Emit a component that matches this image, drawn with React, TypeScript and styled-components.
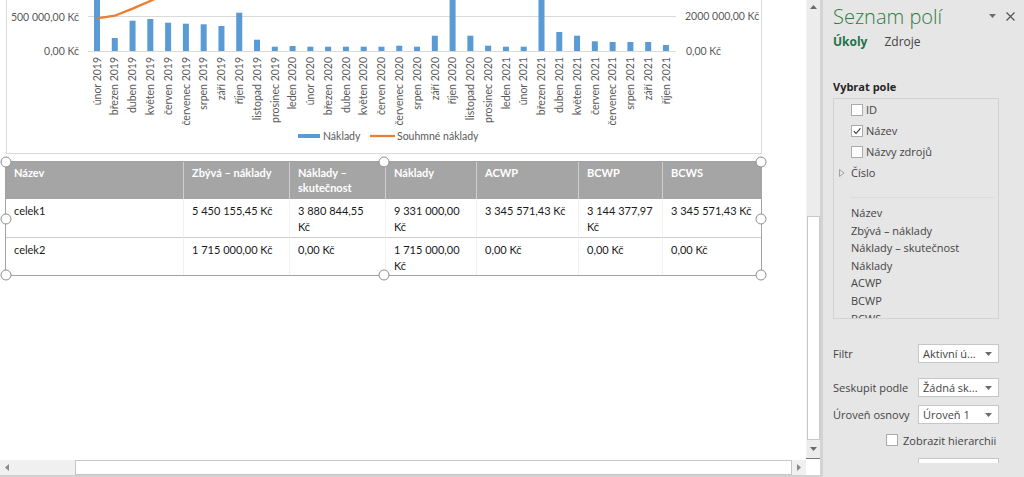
import styled, { createGlobalStyle } from 'styled-components';

const GlobalStyle = createGlobalStyle`
  html, body {
    margin: 0;
    padding: 0;
    overflow: hidden;
    background: #fff;
  }
  body {
    font-family: 'Open Sans', 'Liberation Sans', sans-serif;
  }
`;

const months = [
  'únor 2019', 'březen 2019', 'duben 2019', 'květen 2019', 'červen 2019', 'červenec 2019',
  'srpen 2019', 'září 2019', 'říjen 2019', 'listopad 2019', 'prosinec 2019', 'leden 2020',
  'únor 2020', 'březen 2020', 'duben 2020', 'květen 2020', 'červen 2020', 'červenec 2020',
  'srpen 2020', 'září 2020', 'říjen 2020', 'listopad 2020', 'prosinec 2020', 'leden 2021',
  'únor 2021', 'březen 2021', 'duben 2021', 'květen 2021', 'červen 2021', 'červenec 2021',
  'srpen 2021', 'září 2021', 'říjen 2021',
];

// top edge of each bar (y), baseline is at 51
const barTops = [
  -5, 38, 20.7, 19, 22.7, 23.7, 24.3, 26, 12.7, 39.7, 46.7, 46, 46.7, 46.7, 46.7, 46.7, 46.7,
  45.7, 46.7, 35.7, -5, 35.7, 45.7, 46.7, 46.7, -5, 32, 35.7, 41.3, 42, 42, 42, 45,
];

const BAR_X0 = 97;
const BAR_STEP = 17.78;
const BASE = 51;

const headers = ['Název', 'Zbývá – náklady', 'Náklady –\nskutečnost', 'Náklady', 'ACWP', 'BCWP', 'BCWS'];
const rows = [
  ['celek1', '5 450 155,45 Kč', '3 880 844,55\nKč', '9 331 000,00\nKč', '3 345 571,43 Kč', '3 144 377,97\nKč', '3 345 571,43 Kč'],
  ['celek2', '1 715 000,00 Kč', '0,00 Kč', '1 715 000,00\nKč', '0,00 Kč', '0,00 Kč', '0,00 Kč'],
];

const handles = [
  [0, 0], [50, 0], [100, 0],
  [0, 50], [100, 50],
  [0, 100], [50, 100], [100, 100],
];

const fields = [
  { name: 'ID', checked: false },
  { name: 'Název', checked: true },
  { name: 'Názvy zdrojů', checked: false },
];

const columns = ['Název', 'Zbývá – náklady', 'Náklady – skutečnost', 'Náklady', 'ACWP', 'BCWP', 'BCWS'];

const Caret = () => (
  <svg width="7" height="4" viewBox="0 0 7 4">
    <path d="M0 0 L7 0 L3.5 4 Z" fill="#6b6b6b" />
  </svg>
);

const Chart = () => (
  <ChartFrame>
    <svg width={754} height={153} viewBox="7 0 754 153">
      <line x1={88} x2={676} y1={16.5} y2={16.5} stroke="#d9d9d9" />
      <line x1={88} x2={676} y1={51.5} y2={51.5} stroke="#d9d9d9" />
      <AxisText x={79} y={20.5} textAnchor="end">500 000,00 Kč</AxisText>
      <AxisText x={79} y={55} textAnchor="end">0,00 Kč</AxisText>
      <AxisText x={685} y={20} textAnchor="start">2000 000,00 Kč</AxisText>
      <AxisText x={686} y={55} textAnchor="start">0,00 Kč</AxisText>
      {barTops.map((t, i) => (
        <rect key={i} x={BAR_X0 + i * BAR_STEP - 3} y={t} width={6} height={BASE - t} fill="#5b9bd5" />
      ))}
      <polyline
        points="97,18.3 114.8,15.7 132.6,8.6 150.3,1 168,-7"
        fill="none"
        stroke="#ed7d31"
        strokeWidth={2.25}
        strokeLinejoin="round"
      />
      {months.map((m, i) => (
        <AxisText
          key={m}
          textAnchor="end"
          transform={`translate(${BAR_X0 + i * BAR_STEP + 3.7},57) rotate(-90)`}
        >
          {m}
        </AxisText>
      ))}
      <rect x={298} y={134} width={22} height={4} fill="#5b9bd5" />
      <AxisText x={323} y={139.5}>Náklady</AxisText>
      <line x1={370} x2={395} y1={136} y2={136} stroke="#ed7d31" strokeWidth={2.25} />
      <AxisText x={397} y={139.5}>Souhmné náklady</AxisText>
    </svg>
  </ChartFrame>
);

const DataTable = () => (
  <TableFrame>
    <Grid>
      {headers.map((h, i) => (
        <HeadCell key={h} $last={i === headers.length - 1}>{h}</HeadCell>
      ))}
      {rows.map((r, ri) =>
        r.map((c, ci) => (
          <BodyCell key={`${ri}-${ci}`} $last={ci === r.length - 1} $divider={ri === 0}>
            {c}
          </BodyCell>
        ))
      )}
    </Grid>
    {handles.map(([x, y], i) => (
      <Handle key={i} $x={x} $y={y} />
    ))}
  </TableFrame>
);

const Scrollbars = () => (
  <>
    <VScroll>
      <ArrowBox $h={14}>
        <svg width="7" height="4" viewBox="0 0 7 4"><path d="M0 4 L7 4 L3.5 0 Z" fill="#6b6b6b" /></svg>
      </ArrowBox>
      <Spacer />
      <VThumb />
      <ArrowBox $h={18}>
        <Caret />
      </ArrowBox>
    </VScroll>
    <HScroll>
      <HArrow>
        <svg width="4" height="7" viewBox="0 0 4 7"><path d="M4 0 L4 7 L0 3.5 Z" fill="#8a8a8a" /></svg>
      </HArrow>
      <HTrack />
      <HThumb />
      <HArrow>
        <svg width="4" height="7" viewBox="0 0 4 7"><path d="M0 0 L0 7 L4 3.5 Z" fill="#8a8a8a" /></svg>
      </HArrow>
    </HScroll>
    <Corner />
  </>
);

const FieldPanel = () => (
  <Panel>
    <PanelBody>
      <TitleRow>
        <Title>Seznam polí</Title>
        <TitleTools>
          <Caret />
          <svg width="9" height="9" viewBox="0 0 9 9">
            <path d="M0.5 0.5 L8.5 8.5 M8.5 0.5 L0.5 8.5" stroke="#555" strokeWidth="1.2" />
          </svg>
        </TitleTools>
      </TitleRow>
      <Tabs>
        <Tab $active>Úkoly</Tab>
        <Tab>Zdroje</Tab>
      </Tabs>
      <SectionHeading>Vybrat pole</SectionHeading>
      <FieldBox>
        {fields.map((f) => (
          <CheckRow key={f.name}>
            <CheckBox>
              {f.checked && (
                <svg width="10" height="10" viewBox="0 0 10 10">
                  <path d="M1.8 5.2 L4 7.5 L8.4 2.4" fill="none" stroke="#333" strokeWidth="1.1" />
                </svg>
              )}
            </CheckBox>
            {f.name}
          </CheckRow>
        ))}
        <TreeRow>
          <svg width="6" height="8" viewBox="0 0 6 8">
            <path d="M0.5 0.5 L5 4 L0.5 7.5 Z" fill="none" stroke="#9a9a9a" strokeWidth="0.9" />
          </svg>
          Číslo
        </TreeRow>
        <Divider />
        <ColumnList>
          {columns.map((c) => (
            <ColumnItem key={c}>{c}</ColumnItem>
          ))}
        </ColumnList>
      </FieldBox>
      <OptionRow $top={25}>
        <OptionLabel>Filtr</OptionLabel>
        <Select>
          <span>Aktivní ú...</span>
          <Caret />
        </Select>
      </OptionRow>
      <OptionRow $top={15}>
        <OptionLabel>Seskupit podle</OptionLabel>
        <Select>
          <span>Žádná sk...</span>
          <Caret />
        </Select>
      </OptionRow>
      <OptionRow $top={8}>
        <OptionLabel>Úroveň osnovy</OptionLabel>
        <Select>
          <span>Úroveň 1</span>
          <Caret />
        </Select>
      </OptionRow>
      <HierarchyRow>
        <CheckBox />
        Zobrazit hierarchii
      </HierarchyRow>
      <OptionRow $top={9}>
        <OptionLabel />
        <Select />
      </OptionRow>
    </PanelBody>
    <PanelFoot />
  </Panel>
);

export default function App() {
  return (
    <>
      <GlobalStyle />
      <Screen>
        <Workspace>
          <Document>
            <Chart />
            <DataTable />
          </Document>
          <Scrollbars />
        </Workspace>
        <FieldPanel />
      </Screen>
    </>
  );
}

const Screen = styled.div`
  display: flex;
  width: 1024px;
  height: 477px;
  overflow: hidden;
`;

const Workspace = styled.div`
  width: 820px;
  flex: none;
  display: grid;
  grid-template-columns: 806px 14px;
  grid-template-rows: 458px 19px;
`;

const Document = styled.div`
  background: #fff;
  overflow: hidden;
  padding-left: 5px;
  display: flex;
  flex-direction: column;
  gap: 7px;
`;

const ChartFrame = styled.div`
  margin-left: 1px;
  width: 756px;
  height: 154px;
  box-sizing: border-box;
  border: 1px solid #d9d9d9;
  border-top: none;
  flex: none;

  svg {
    display: block;
  }
`;

const AxisText = styled.text`
  font-family: Lato, 'Liberation Sans', sans-serif;
  font-size: 10.5px;
  fill: #595959;
`;

const TableFrame = styled.div`
  position: relative;
  width: 757px;
  box-sizing: border-box;
  border: 1px solid #a3a3a3;
  flex: none;
`;

const Grid = styled.div`
  display: grid;
  grid-template-columns: 178px 106px 96px 91px 102px 84px 98px;
  grid-template-rows: 37px 39px 37px;
  font-family: Lato, 'Liberation Sans', sans-serif;
  font-size: 11px;
`;

const HeadCell = styled.div<{ $last?: boolean }>`
  background: #a5a5a5;
  color: #fff;
  font-weight: 700;
  padding: 3px 8px 0;
  line-height: 15px;
  white-space: pre-line;
  border-right: ${(p) => (p.$last ? 'none' : '1px solid #cfcfcf')};
`;

const BodyCell = styled.div<{ $last?: boolean; $divider?: boolean }>`
  background: #fff;
  color: #1a1a1a;
  padding: 4px 8px 0;
  line-height: 16px;
  white-space: pre-line;
  border-right: ${(p) => (p.$last ? 'none' : '1px solid #f1f1f1')};
  border-bottom: ${(p) => (p.$divider ? '1px solid #cdcdcd' : 'none')};
`;

const Handle = styled.span<{ $x: number; $y: number }>`
  position: absolute;
  left: ${(p) => p.$x}%;
  top: ${(p) => p.$y}%;
  width: 9px;
  height: 9px;
  border-radius: 50%;
  background: #fff;
  border: 1px solid #8f8f8f;
  transform: translate(-50%, -50%);
`;

const VScroll = styled.div`
  background: #ececec;
  display: flex;
  flex-direction: column;
  border-left: 1px solid #f4f4f4;
`;

const ArrowBox = styled.div<{ $h: number }>`
  height: ${(p) => p.$h}px;
  display: flex;
  align-items: center;
  justify-content: center;
  flex: none;
`;

const Spacer = styled.div`
  flex: 1;
`;

const VThumb = styled.div`
  height: 222px;
  flex: none;
  background: #fff;
  border: 1px solid #c9c9c9;
`;

const HScroll = styled.div`
  display: flex;
  align-items: stretch;
  padding-top: 2px;
  border-bottom: 2px solid #d2d2d2;
  background: #fff;
`;

const HArrow = styled.div`
  width: 14px;
  flex: none;
  display: flex;
  align-items: center;
  justify-content: center;
  background: #f0f0f0;
`;

const HTrack = styled.div`
  width: 61px;
  flex: none;
  background: #f0f0f0;
`;

const HThumb = styled.div`
  flex: 1;
  background: #fff;
  border: 1px solid #c6c6c6;
`;

const Corner = styled.div`
  background: #fff;
  border-top: 1px solid #7a7a7a;
  border-bottom: 2px solid #d2d2d2;
`;

const Panel = styled.div`
  flex: 1;
  display: flex;
  flex-direction: column;
  background: #e6e6e6;
  border-left: 3px solid #d3d3d3;
  overflow: hidden;
`;

const PanelBody = styled.div`
  flex: 1;
  overflow: hidden;
  padding-left: 10px;
  display: flex;
  flex-direction: column;
  color: #444;
  font-size: 11px;
`;

const PanelFoot = styled.div`
  height: 14px;
  flex: none;
  background: #e6e6e6;
`;

const TitleRow = styled.div`
  display: flex;
  justify-content: space-between;
  padding: 4px 9px 0 0;
`;

const Title = styled.div`
  font-size: 20px;
  line-height: 26px;
  font-weight: 300;
  color: #2f7d3d;
`;

const TitleTools = styled.div`
  display: flex;
  align-items: center;
  gap: 10px;
  height: 16px;
  margin-top: 4px;
`;

const Tabs = styled.div`
  display: flex;
  gap: 17px;
  margin-top: 4px;
`;

const Tab = styled.span<{ $active?: boolean }>`
  font-size: 12px;
  line-height: 16px;
  font-weight: ${(p) => (p.$active ? 700 : 400)};
  color: ${(p) => (p.$active ? '#217346' : '#444')};
`;

const SectionHeading = styled.div`
  margin-top: 29px;
  font-weight: 700;
  line-height: 15px;
  color: #262626;
`;

const FieldBox = styled.div`
  margin-top: 4px;
  width: 166px;
  height: 221px;
  box-sizing: border-box;
  border: 1px solid #d2d2d2;
  display: flex;
  flex-direction: column;
  overflow: hidden;
  flex: none;
`;

const CheckRow = styled.div`
  display: flex;
  align-items: center;
  gap: 3px;
  height: 21px;
  padding-left: 17px;
  flex: none;
`;

const CheckBox = styled.span`
  width: 12px;
  height: 12px;
  box-sizing: border-box;
  background: #fff;
  border: 1px solid #ababab;
  display: inline-flex;
  align-items: center;
  justify-content: center;
  flex: none;
`;

const TreeRow = styled.div`
  display: flex;
  align-items: center;
  gap: 6px;
  height: 21px;
  padding-left: 5px;
  flex: none;
`;

const Divider = styled.div`
  height: 1px;
  background: #dcdcdc;
  margin: 14px 4px 6px 16px;
  flex: none;
`;

const ColumnList = styled.div`
  padding-left: 17px;
`;

const ColumnItem = styled.div`
  line-height: 17.6px;
`;

const OptionRow = styled.div<{ $top: number }>`
  display: flex;
  align-items: center;
  margin-top: ${(p) => p.$top}px;
  flex: none;
`;

const OptionLabel = styled.span`
  width: 85px;
  flex: none;
`;

const Select = styled.div`
  width: 81px;
  height: 19px;
  box-sizing: border-box;
  background: #fff;
  border: 1px solid #c6c6c6;
  display: flex;
  align-items: center;
  justify-content: space-between;
  padding: 0 6px 0 4px;
  color: #444;
`;

const HierarchyRow = styled.div`
  display: flex;
  align-items: center;
  gap: 5px;
  height: 18px;
  margin-top: 7px;
  padding-left: 53px;
  font-size: 11px;
  flex: none;
`;
